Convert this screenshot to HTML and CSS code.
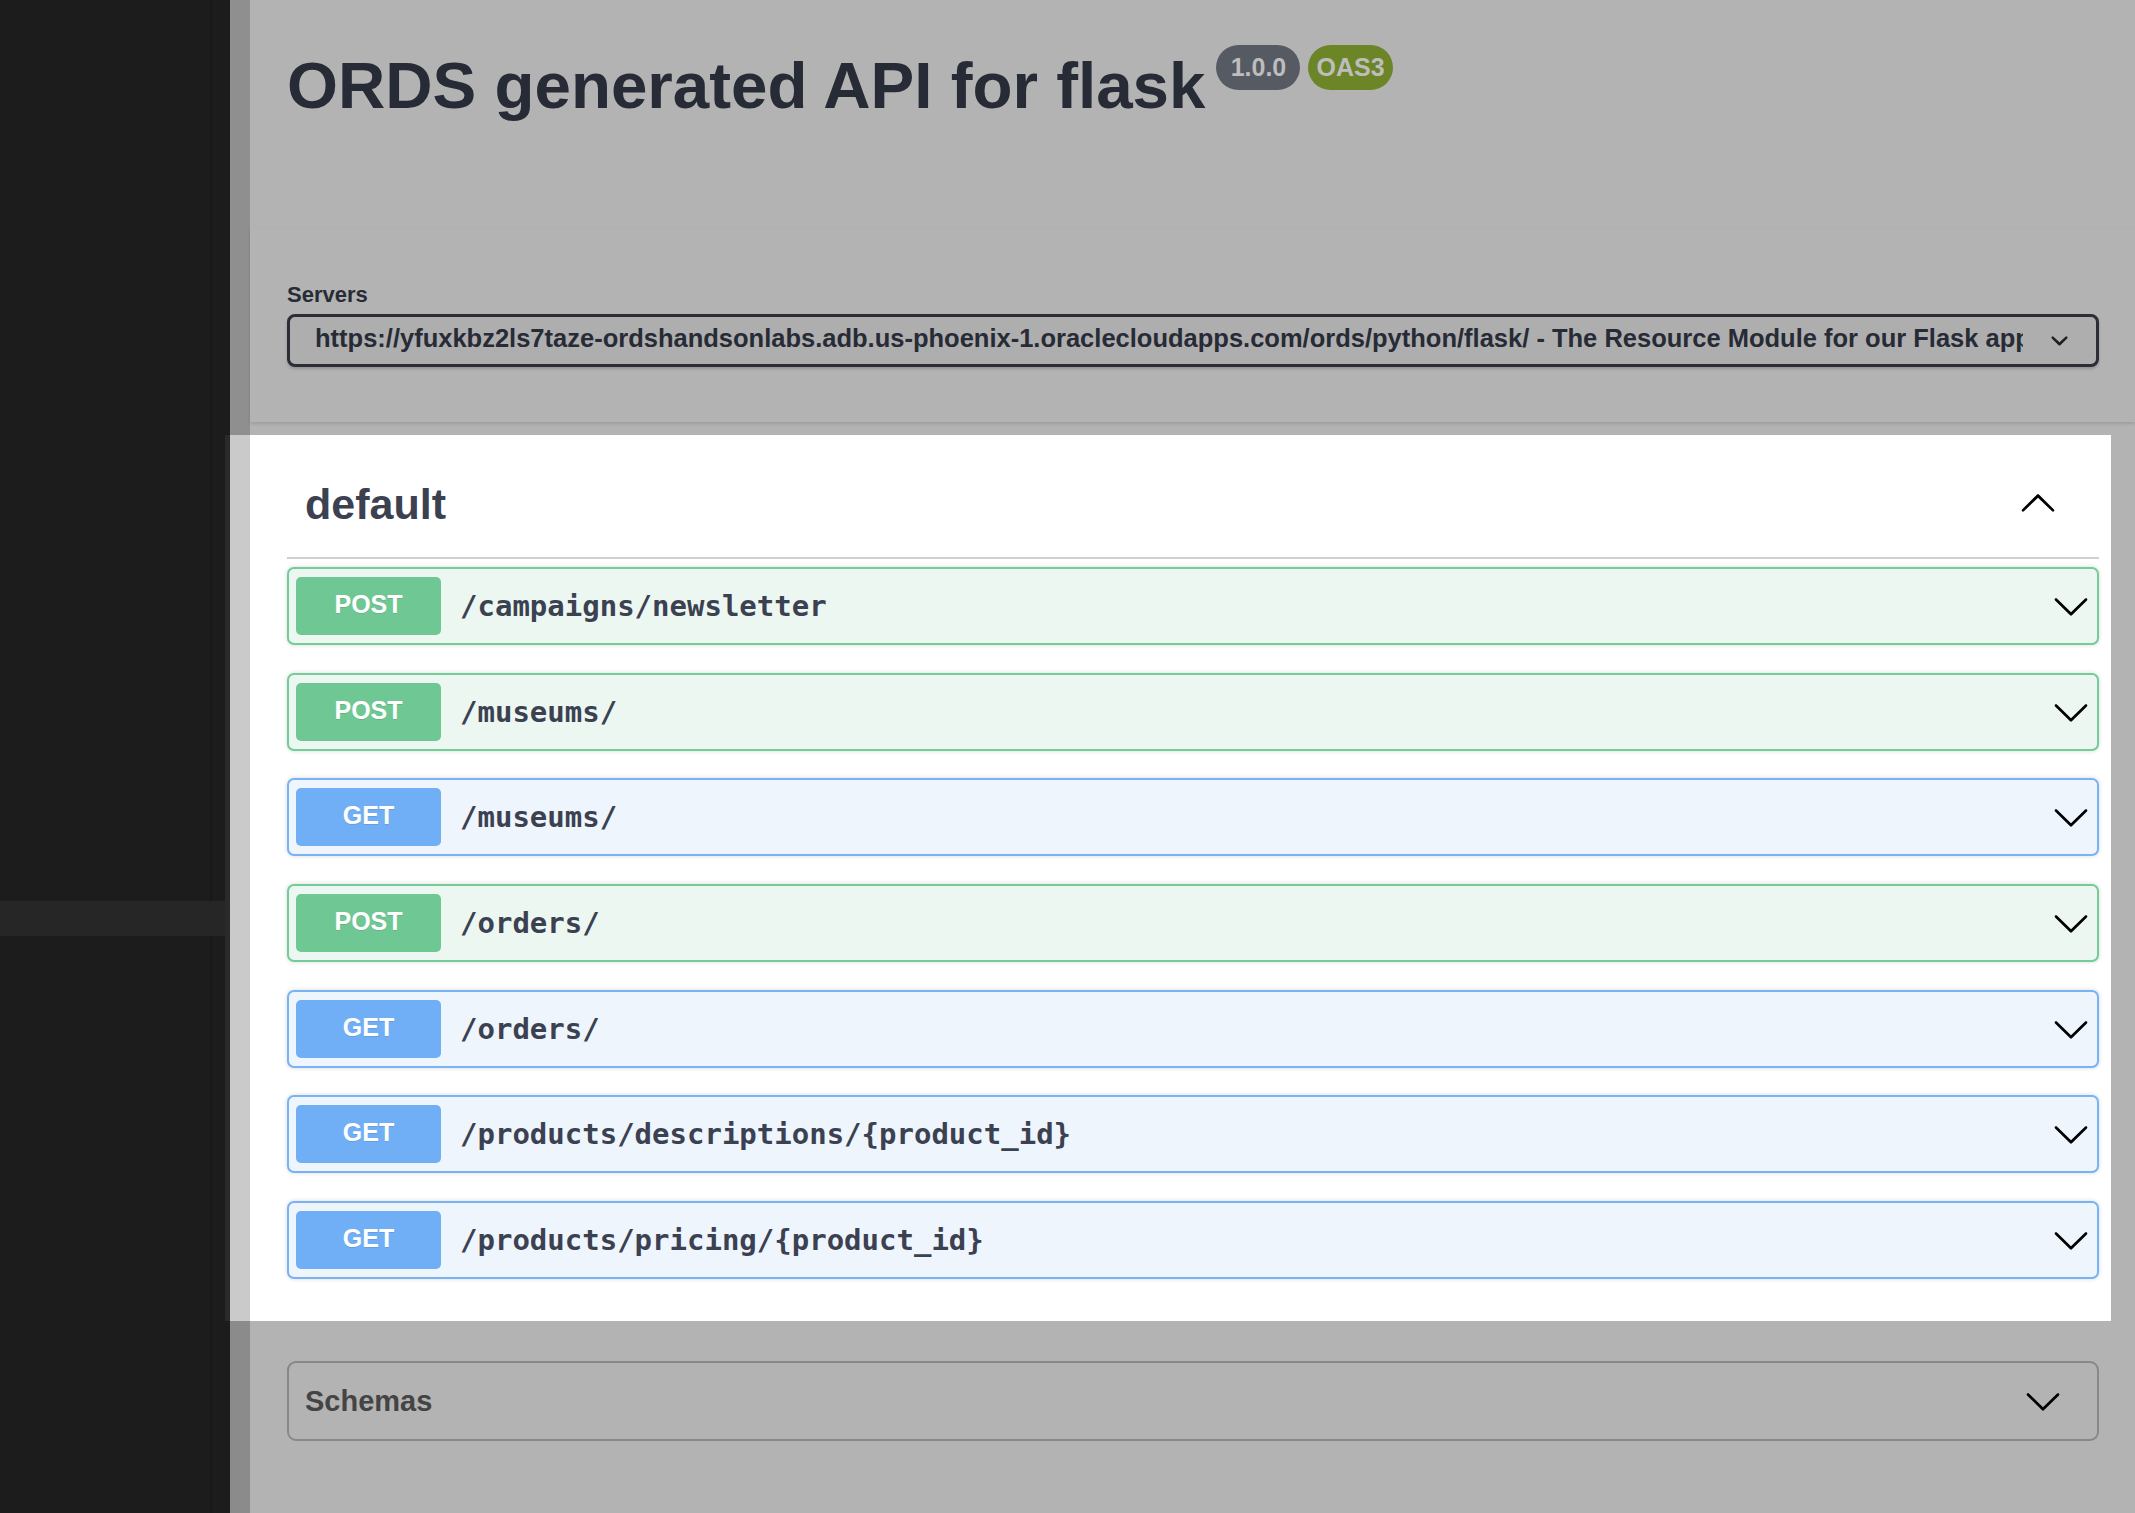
FILE: index.html
```html
<!DOCTYPE html>
<html lang="en">
<head>
<meta charset="utf-8">
<title>ORDS generated API for flask</title>
<link rel="stylesheet" href="styles.css">
</head>
<body>
<aside class="sidebar">
  <div class="sidebar-gap"></div>
  <div class="sidebar-row"></div>
</aside>
<main class="page">
  <header class="top">
    <div class="info">
      <h1 class="title"><span class="title-text">ORDS generated API for flask</span><span class="badges"><small class="badge version">1.0.0</small><small class="badge oas">OAS3</small></span></h1>
    </div>
    <div class="scheme">
      <div class="servers-title">Servers</div>
      <div class="select">
        <span class="select-text">https://yfuxkbz2ls7taze-ordshandsonlabs.adb.us-phoenix-1.oraclecloudapps.com/ords/python/flask/ - The Resource Module for our Flask app</span>
        <svg class="select-arrow" viewBox="0 0 20 20" aria-hidden="true"><path d="M13.418 7.859a.695.695 0 01.978 0 .68.68 0 010 .969l-3.908 3.83a.697.697 0 01-.979 0l-3.908-3.83a.68.68 0 010-.969.695.695 0 01.978 0L10 11l3.418-3.141z"/></svg>
      </div>
    </div>
  </header>

  <section class="spot">
    <div class="tag">
      <h3 class="tag-name">default</h3>
      <svg class="arrow" viewBox="0 0 20 20" aria-hidden="true"><path transform="rotate(180 10 10.5)" d="M17.418 6.109c.272-.268.709-.268.979 0s.271.701 0 .969l-7.908 7.83c-.27.268-.707.268-.979 0l-7.908-7.83c-.27-.268-.27-.701 0-.969.271-.268.709-.268.979 0L10 13.25l7.418-7.141z"/></svg>
    </div>
    <div class="ops">
      <div class="op post">
        <span class="method">POST</span>
        <span class="path">/campaigns/newsletter</span>
        <svg class="arrow" viewBox="0 0 20 20" aria-hidden="true"><path d="M17.418 6.109c.272-.268.709-.268.979 0s.271.701 0 .969l-7.908 7.83c-.27.268-.707.268-.979 0l-7.908-7.83c-.27-.268-.27-.701 0-.969.271-.268.709-.268.979 0L10 13.25l7.418-7.141z"/></svg>
      </div>
      <div class="op post">
        <span class="method">POST</span>
        <span class="path">/museums/</span>
        <svg class="arrow" viewBox="0 0 20 20" aria-hidden="true"><path d="M17.418 6.109c.272-.268.709-.268.979 0s.271.701 0 .969l-7.908 7.83c-.27.268-.707.268-.979 0l-7.908-7.83c-.27-.268-.27-.701 0-.969.271-.268.709-.268.979 0L10 13.25l7.418-7.141z"/></svg>
      </div>
      <div class="op get">
        <span class="method">GET</span>
        <span class="path">/museums/</span>
        <svg class="arrow" viewBox="0 0 20 20" aria-hidden="true"><path d="M17.418 6.109c.272-.268.709-.268.979 0s.271.701 0 .969l-7.908 7.83c-.27.268-.707.268-.979 0l-7.908-7.83c-.27-.268-.27-.701 0-.969.271-.268.709-.268.979 0L10 13.25l7.418-7.141z"/></svg>
      </div>
      <div class="op post">
        <span class="method">POST</span>
        <span class="path">/orders/</span>
        <svg class="arrow" viewBox="0 0 20 20" aria-hidden="true"><path d="M17.418 6.109c.272-.268.709-.268.979 0s.271.701 0 .969l-7.908 7.83c-.27.268-.707.268-.979 0l-7.908-7.83c-.27-.268-.27-.701 0-.969.271-.268.709-.268.979 0L10 13.25l7.418-7.141z"/></svg>
      </div>
      <div class="op get">
        <span class="method">GET</span>
        <span class="path">/orders/</span>
        <svg class="arrow" viewBox="0 0 20 20" aria-hidden="true"><path d="M17.418 6.109c.272-.268.709-.268.979 0s.271.701 0 .969l-7.908 7.83c-.27.268-.707.268-.979 0l-7.908-7.83c-.27-.268-.27-.701 0-.969.271-.268.709-.268.979 0L10 13.25l7.418-7.141z"/></svg>
      </div>
      <div class="op get">
        <span class="method">GET</span>
        <span class="path">/products/descriptions/{product_id}</span>
        <svg class="arrow" viewBox="0 0 20 20" aria-hidden="true"><path d="M17.418 6.109c.272-.268.709-.268.979 0s.271.701 0 .969l-7.908 7.83c-.27.268-.707.268-.979 0l-7.908-7.83c-.27-.268-.27-.701 0-.969.271-.268.709-.268.979 0L10 13.25l7.418-7.141z"/></svg>
      </div>
      <div class="op get">
        <span class="method">GET</span>
        <span class="path">/products/pricing/{product_id}</span>
        <svg class="arrow" viewBox="0 0 20 20" aria-hidden="true"><path d="M17.418 6.109c.272-.268.709-.268.979 0s.271.701 0 .969l-7.908 7.83c-.27.268-.707.268-.979 0l-7.908-7.83c-.27-.268-.27-.701 0-.969.271-.268.709-.268.979 0L10 13.25l7.418-7.141z"/></svg>
      </div>
    </div>
  </section>

  <section class="bottom">
    <div class="schemas">
      <h4 class="schemas-title">Schemas</h4>
      <svg class="arrow" viewBox="0 0 20 20" aria-hidden="true"><path d="M17.418 6.109c.272-.268.709-.268.979 0s.271.701 0 .969l-7.908 7.83c-.27.268-.707.268-.979 0l-7.908-7.83c-.27-.268-.27-.701 0-.969.271-.268.709-.268.979 0L10 13.25l7.418-7.141z"/></svg>
    </div>
  </section>
</main>
</body>
</html>
```

FILE: styles.css
```css
* { box-sizing: border-box; }

html, body {
  margin: 0;
  padding: 0;
}

body {
  display: flex;
  min-height: 1513px;
  background: #b3b3b3;
  font-family: "Liberation Sans", Arial, Helvetica, sans-serif;
  color: #272b36;
}

/* dark sidebar of the host window */
.sidebar {
  width: 230px;
  flex: 0 0 230px;
  display: flex;
  flex-direction: column;
  background: linear-gradient(to right, #1c1c1c 210px, #181818 210px, #181818 212px, #1c1c1c 212px);
}
.sidebar-gap { height: 901px; }
.sidebar-row {
  height: 35px;
  background: #262626;
}

.page {
  flex: 1;
  display: flex;
  flex-direction: column;
  min-width: 0;
}

/* ---------- dimmed header ---------- */
.top {
  border-left: 20px solid #8f8f8f;
}

.info {
  height: 228px;
  padding: 48px 36px 0 37px;
  border-bottom: 1px solid #b1b1b1;
}

.title {
  display: flex;
  align-items: flex-start;
  margin: 0;
  font-size: 65.5px;
  line-height: 75px;
  font-weight: 700;
  color: #272b36;
}

.badges {
  display: flex;
  gap: 8px;
  margin-left: 11px;
  margin-top: -3px;
}

.badge {
  min-width: 84px;
  height: 45px;
  padding: 0 8px;
  border-radius: 30px;
  font-size: 25px;
  line-height: 45px;
  font-weight: 700;
  text-align: center;
  color: #bdbdbd;
}
.badge.version { background: #565a63; }
.badge.oas { background: #6b8527; }

.scheme {
  height: 194px;
  padding: 54px 36px 0 37px;
  margin-bottom: 13px;
  box-shadow: 0 2px 3px rgba(0, 0, 0, 0.12);
}

.servers-title {
  font-size: 22px;
  line-height: 26px;
  font-weight: 700;
  color: #272b36;
}

.select {
  display: flex;
  align-items: center;
  height: 53px;
  margin-top: 6px;
  padding: 0 19px 0 25px;
  border: 3px solid #2b2e37;
  border-radius: 8px;
  background: #aeaeae;
  box-shadow: 0 2px 3px rgba(0, 0, 0, 0.18);
}

.select-text {
  flex: 1;
  min-width: 0;
  overflow: hidden;
  white-space: nowrap;
  font-size: 25.5px;
  font-weight: 700;
  color: #272b36;
  margin-right: 19px;
  padding-bottom: 4px;
}

.select-arrow {
  width: 35px;
  height: 35px;
  flex: 0 0 35px;
  fill: #1f1f1f;
}

/* ---------- highlighted tag section ---------- */
.spot {
  height: 886px;
  margin-right: 24px;
  border-left: 20px solid #cacaca;
  background: #ffffff;
  padding: 0 12px 0 37px;
  box-shadow: -5px 0 0 0 #2a2a2a;
}

.tag {
  display: flex;
  align-items: flex-start;
  padding: 48px 42px 31px 18px;
  border-bottom: 2px solid #cfd0d3;
}

.tag-name {
  flex: 1;
  margin: 0;
  font-size: 43px;
  line-height: 43px;
  font-weight: 700;
  color: #3b4151;
}

.arrow {
  width: 38px;
  height: 38px;
  flex: 0 0 38px;
  fill: #000;
}

.ops {
  margin-top: 8px;
}

.op {
  display: flex;
  align-items: center;
  height: 78px;
  padding: 8px 7px;
  margin-bottom: 27.67px;
  border: 2px solid;
  border-radius: 7px;
  box-shadow: 0 0 4px rgba(0, 0, 0, 0.16);
}

.op.post {
  background: #edf7f1;
  border-color: #72cd98;
}
.op.get {
  background: #eef5fd;
  border-color: #78b3f5;
}

.method {
  width: 145px;
  height: 58px;
  flex: 0 0 145px;
  display: flex;
  align-items: center;
  justify-content: center;
  border-radius: 5px;
  font-size: 25px;
  font-weight: 700;
  color: #ffffff;
  text-shadow: 0 1px 0 rgba(0, 0, 0, 0.1);
  padding-bottom: 3px;
}
.op.post .method { background: #6fc794; }
.op.get .method { background: #70aef5; }

.path {
  flex: 1;
  margin-left: 19px;
  font-family: "DejaVu Sans Mono", "Liberation Mono", monospace;
  font-size: 29px;
  font-weight: 700;
  color: #3b4151;
}

/* ---------- dimmed bottom ---------- */
.bottom {
  flex: 1;
  border-left: 20px solid #8b8b8b;
  padding: 40px 36px 0 37px;
}

.schemas {
  display: flex;
  align-items: center;
  height: 80px;
  padding: 0 35px 0 16px;
  border: 2px solid #888888;
  border-radius: 9px;
}

.schemas-title {
  flex: 1;
  margin: 0;
  font-size: 29px;
  font-weight: 700;
  color: #444444;
}
```
